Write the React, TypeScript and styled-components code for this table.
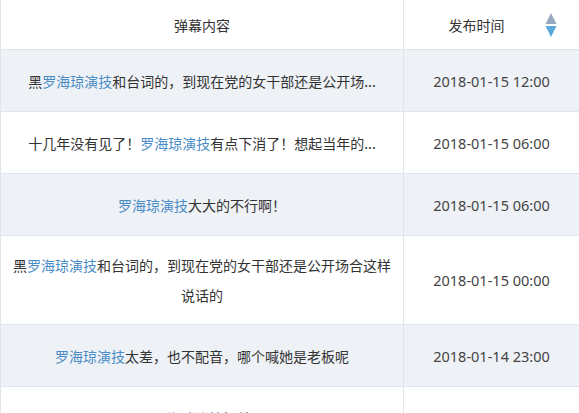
import React from "react";
import styled, { createGlobalStyle } from "styled-components";

type Row = {
  pre?: string;
  name: string;
  post: string;
  time: string;
};

const rows: Row[] = [
  { pre: "黑", name: "罗海琼演技", post: "和台词的，到现在党的女干部还是公开场...", time: "2018-01-15 12:00" },
  { pre: "十几年没有见了！", name: "罗海琼演技", post: "有点下消了！想起当年的...", time: "2018-01-15 06:00" },
  { name: "罗海琼演技", post: "大大的不行啊！", time: "2018-01-15 06:00" },
  { pre: "黑", name: "罗海琼演技", post: "和台词的，到现在党的女干部还是公开场合这样说话的", time: "2018-01-15 00:00" },
  { name: "罗海琼演技", post: "太差，也不配音，哪个喊她是老板呢", time: "2018-01-14 23:00" },
  { name: "罗海琼演技", post: "好差", time: "2018-01-14 22:00" },
];

const App = () => {
  return (
    <>
      <GlobalStyle />
      <Table>
        <HeadCell>弹幕内容</HeadCell>
        <HeadCell $last>
          <HeadLabel>发布时间</HeadLabel>
          <SortIcon width="12" height="26" viewBox="0 0 12 26">
            <path d="M6 1 L11.5 12 L0.5 12 Z" fill="#97a8be" />
            <path d="M0.5 14 L11.5 14 L6 25 Z" fill="#5aa9dc" />
          </SortIcon>
        </HeadCell>
        {rows.map((row, i) => (
          <React.Fragment key={i}>
            <Cell $striped={i % 2 === 0}>
              <Content>
                {row.pre}
                <Name>{row.name}</Name>
                {row.post}
              </Content>
            </Cell>
            <Cell $striped={i % 2 === 0} $last>
              <Time>{row.time}</Time>
            </Cell>
          </React.Fragment>
        ))}
      </Table>
    </>
  );
};

export default App;

const GlobalStyle = createGlobalStyle`
  html, body {
    margin: 0;
    padding: 0;
    background: #ffffff;
    overflow: hidden;
  }
  body {
    font-family: "Noto Sans CJK SC", "Noto Sans", sans-serif;
  }
`;

const Table = styled.div`
  display: grid;
  grid-template-columns: 403px 1fr;
  width: 579px;
  border-left: 1px solid #dfe6ec;
  box-sizing: border-box;
`;

const HeadCell = styled.div<{ $last?: boolean }>`
  display: flex;
  align-items: center;
  justify-content: center;
  position: relative;
  height: 50px;
  box-sizing: border-box;
  border-bottom: 1px solid #dfe6ec;
  border-right: ${({ $last }) => ($last ? "none" : "1px solid #dfe6ec")};
  background: #ffffff;
  color: #333333;
  font-size: 14px;
`;

const HeadLabel = styled.span`
  margin-right: 30px;
`;

const SortIcon = styled.svg`
  position: absolute;
  right: 22px;
  top: 12px;
`;

const Cell = styled.div<{ $striped?: boolean; $last?: boolean }>`
  display: flex;
  align-items: center;
  justify-content: center;
  min-height: 62px;
  padding: 14px 10px;
  box-sizing: border-box;
  background: ${({ $striped }) => ($striped ? "#eef1f6" : "#ffffff")};
  border-bottom: 1px solid #dfe6ec;
  border-right: ${({ $last }) => ($last ? "none" : "1px solid #dfe6ec")};
`;

const Content = styled.div`
  text-align: center;
  color: #333333;
  font-size: 14px;
  line-height: 30px;
`;

const Name = styled.span`
  color: #4a8cc6;
`;

const Time = styled.div`
  color: #444444;
  font-size: 14.5px;
  font-family: "Noto Sans", "Open Sans", sans-serif;
  line-height: 30px;
`;
